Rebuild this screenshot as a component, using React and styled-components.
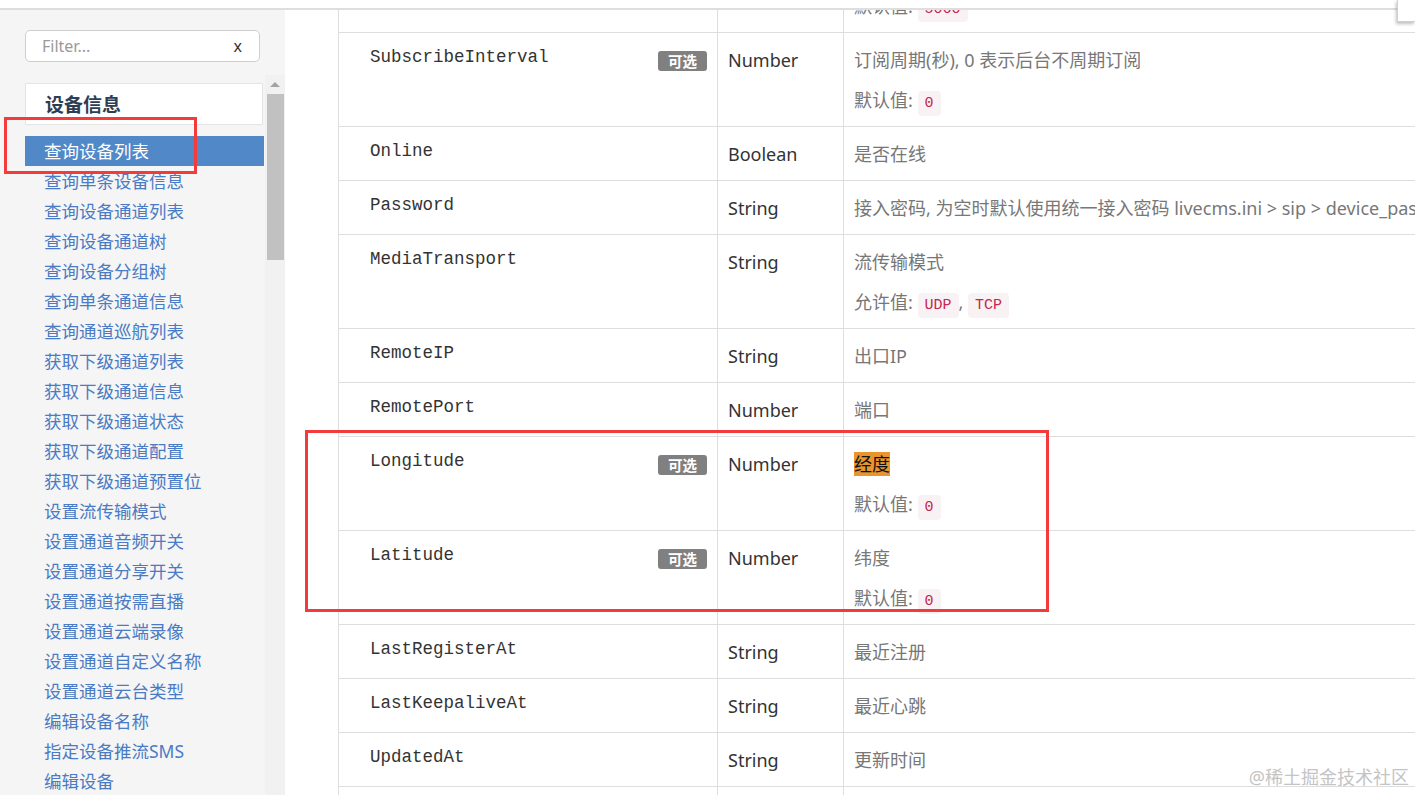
import React from 'react'
import styled, { createGlobalStyle } from 'styled-components'

const GlobalStyle = createGlobalStyle`
  * {
    margin: 0;
    padding: 0;
    box-sizing: border-box;
  }
  body {
    font-family: "Noto Sans", "Noto Sans CJK SC", sans-serif;
    background: #fff;
    overflow: hidden;
  }
`

const CJK = `"Noto Sans", "Noto Sans CJK SC", sans-serif`
const MONO = `"Liberation Mono", "DejaVu Sans Mono", monospace`

const Page = styled.div`
  position: relative;
  width: 100vw;
  height: 100vh;
  display: flex;
  flex-direction: column;
  overflow: hidden;
`

const TopBar = styled.div`
  height: 10px;
  flex-shrink: 0;
  background: #fff;
  border-bottom: 2px solid #dedede;
`

const Body = styled.div`
  flex: 1;
  display: flex;
  min-height: 0;
`

const Sidebar = styled.aside`
  width: 285px;
  flex-shrink: 0;
  background: #f5f5f5;
  padding-top: 20px;
  display: flex;
  flex-direction: column;
`

const Filter = styled.div`
  margin-left: 25px;
  width: 235px;
  height: 32px;
  background: #fff;
  border: 1px solid #cfcfcf;
  border-radius: 5px;
  display: flex;
  align-items: center;
  justify-content: space-between;
  padding: 0 17px 0 16px;
  font-family: "Noto Sans", sans-serif;
  font-size: 16px;
`

const Placeholder = styled.span`
  color: #9a9a9a;
`

const Clear = styled.span`
  color: #333;
`

const MenuWrap = styled.div`
  flex: 1;
  display: flex;
  margin-top: 13px;
  padding-left: 25px;
  min-height: 0;
`

const MenuList = styled.div`
  width: 239px;
  padding-top: 8px;
  overflow: hidden;
`

const MenuHeader = styled.div`
  width: 238px;
  height: 42px;
  background: #fff;
  border: 1px solid #e4e4e4;
  padding-left: 19px;
  display: flex;
  align-items: center;
  font-family: ${CJK};
  font-weight: 700;
  font-size: 19px;
  color: #2c3e55;
  margin-bottom: 11px;
`

const MenuItem = styled.div`
  height: 30px;
  line-height: 30px;
  padding-left: 19px;
  font-family: ${CJK};
  font-size: 17.5px;
  white-space: nowrap;
  color: ${p => (p.$active ? '#fff' : '#4a7bc4')};
  background: ${p => (p.$active ? '#5088c8' : 'transparent')};
`

const Track = styled.div`
  width: 20px;
  margin-left: 1px;
  background: #f1f1f1;
  display: flex;
  flex-direction: column;
  align-items: center;
  padding-top: 7px;
`

const Arrow = styled.div`
  width: 0;
  height: 0;
  border-left: 5px solid transparent;
  border-right: 5px solid transparent;
  border-bottom: 5px solid #a3a3a3;
`

const Thumb = styled.div`
  width: 17px;
  height: 166px;
  margin-top: 7px;
  background: #c1c1c1;
`

const Main = styled.main`
  flex: 1;
  overflow: hidden;
  padding-left: 53px;
  background: #fff;
`

const Table = styled.table`
  width: 1200px;
  margin-top: -72px;
  border-collapse: collapse;
  table-layout: fixed;
`

const Td = styled.td`
  border: 1px solid #dedede;
  vertical-align: top;
  padding: 15px 10px 14px;
  line-height: 24px;
`

const NameTd = styled(Td)`
  padding: 12px 10px 14px 31px;
`

const NameRow = styled.div`
  display: flex;
  justify-content: space-between;
  align-items: flex-start;
  height: 24px;
`

const Name = styled.span`
  font-family: ${MONO};
  font-size: 17.5px;
  color: #333;
  line-height: 24px;
`

const Badge = styled.span`
  margin-top: 6px;
  height: 20px;
  line-height: 20px;
  padding: 0 10px;
  border-radius: 3px;
  background: #808080;
  color: #fff;
  font-family: ${CJK};
  font-weight: 700;
  font-size: 14.5px;
`

const TypeTd = styled(Td)`
  font-family: "Noto Sans", sans-serif;
  font-size: 18px;
  color: #333;
`

const DescTd = styled(Td)`
  font-family: ${CJK};
  font-size: 18px;
  color: #777;
  white-space: nowrap;
  overflow: hidden;
`

const Line = styled.p`
  height: 24px;
  line-height: 24px;
  & + & {
    margin-top: 16px;
  }
`

const Mark = styled.span`
  background: #e8952f;
  color: #111;
`

const Code = styled.code`
  font-family: ${MONO};
  font-size: 15px;
  line-height: 18px;
  color: #c7254e;
  background: #f9f2f4;
  padding: 4px 7px;
  border-radius: 4px;
`

const RedBox = styled.div`
  position: absolute;
  border: 3px solid #f33b3b;
  pointer-events: none;
`

const CornerBox = styled.div`
  position: absolute;
  right: 0;
  top: 0;
  width: 18px;
  height: 22px;
  background: #fff;
  border: 1px solid #d0d0d0;
  border-top: none;
  border-right: none;
  box-shadow: -1px 2px 3px rgba(0, 0, 0, 0.25);
`

const Watermark = styled.div`
  position: absolute;
  right: 6px;
  bottom: 6px;
  font-family: ${CJK};
  font-size: 18px;
  color: #c4c4c4;
`

const menu = [
  '查询设备列表', '查询单条设备信息', '查询设备通道列表', '查询设备通道树',
  '查询设备分组树', '查询单条通道信息', '查询通道巡航列表', '获取下级通道列表',
  '获取下级通道信息', '获取下级通道状态', '获取下级通道配置', '获取下级通道预置位',
  '设置流传输模式', '设置通道音频开关', '设置通道分享开关', '设置通道按需直播',
  '设置通道云端录像', '设置通道自定义名称', '设置通道云台类型', '编辑设备名称',
  '指定设备推流SMS', '编辑设备',
]

const rows = [
  { name: 'SIPPort', type: 'Number', desc: '端口', def: '5060' },
  { name: 'SubscribeInterval', opt: true, type: 'Number', desc: '订阅周期(秒), 0 表示后台不周期订阅', def: '0' },
  { name: 'Online', type: 'Boolean', desc: '是否在线' },
  { name: 'Password', type: 'String', desc: '接入密码, 为空时默认使用统一接入密码 livecms.ini > sip > device_password' },
  { name: 'MediaTransport', type: 'String', desc: '流传输模式', allow: ['UDP', 'TCP'] },
  { name: 'RemoteIP', type: 'String', desc: '出口IP' },
  { name: 'RemotePort', type: 'Number', desc: '端口' },
  { name: 'Longitude', opt: true, type: 'Number', desc: '经度', mark: true, def: '0' },
  { name: 'Latitude', opt: true, type: 'Number', desc: '纬度', def: '0' },
  { name: 'LastRegisterAt', type: 'String', desc: '最近注册' },
  { name: 'LastKeepaliveAt', type: 'String', desc: '最近心跳' },
  { name: 'UpdatedAt', type: 'String', desc: '更新时间' },
  { name: 'CreatedAt', type: 'String', desc: '创建时间' },
]

export default function App() {
  return (
    <Page>
      <GlobalStyle />
      <TopBar />
      <Body>
        <Sidebar>
          <Filter>
            <Placeholder>Filter...</Placeholder>
            <Clear>x</Clear>
          </Filter>
          <MenuWrap>
            <MenuList>
              <MenuHeader>设备信息</MenuHeader>
              {menu.map((m, i) => (
                <MenuItem key={m} $active={i === 0}>{m}</MenuItem>
              ))}
            </MenuList>
            <Track>
              <Arrow />
              <Thumb />
            </Track>
          </MenuWrap>
        </Sidebar>
        <Main>
          <Table>
            <colgroup>
              <col style={{ width: 379 }} />
              <col style={{ width: 126 }} />
              <col />
            </colgroup>
            <tbody>
              {rows.map(r => (
                <tr key={r.name}>
                  <NameTd>
                    <NameRow>
                      <Name>{r.name}</Name>
                      {r.opt && <Badge>可选</Badge>}
                    </NameRow>
                  </NameTd>
                  <TypeTd>{r.type}</TypeTd>
                  <DescTd>
                    <Line>{r.mark ? <Mark>{r.desc}</Mark> : r.desc}</Line>
                    {r.def && (
                      <Line>默认值: <Code>{r.def}</Code></Line>
                    )}
                    {r.allow && (
                      <Line>
                        允许值: <Code>{r.allow[0]}</Code>, <Code>{r.allow[1]}</Code>
                      </Line>
                    )}
                  </DescTd>
                </tr>
              ))}
            </tbody>
          </Table>
        </Main>
      </Body>
      <RedBox style={{ left: 4, top: 117, width: 193, height: 57 }} />
      <RedBox style={{ left: 305, top: 430, width: 744, height: 182 }} />
      <CornerBox />
      <Watermark>@稀土掘金技术社区</Watermark>
    </Page>
  )
}
